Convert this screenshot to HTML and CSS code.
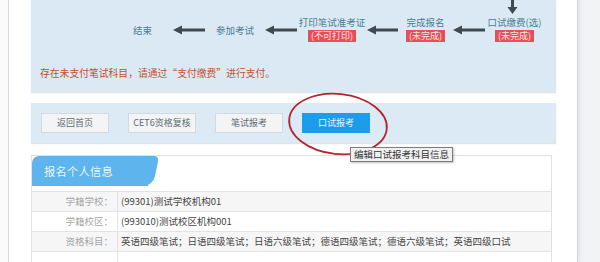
FILE: index.html
```html
<!DOCTYPE html>
<html lang="zh-CN">
<head>
<meta charset="utf-8">
<title>报名</title>
<link rel="stylesheet" href="styles.css">
</head>
<body>
<div class="page">
  <div class="gutter"></div>
  <div class="main">
    <section class="flow-panel">
      <div class="down-row">
        <svg class="down-arrow" width="13" height="14" viewBox="0 0 13 14"><rect x="5" y="0" width="3" height="8" fill="#3e4a50"/><path d="M1.5 7 L11.5 7 L6.5 14 Z" fill="#3e4a50"/></svg>
      </div>
      <div class="flow">
        <div class="step s1"><span class="label">结束</span></div>
        <svg class="arrow w32" viewBox="0 0 32 10"><path d="M0 5 L9 0.5 L9 9.5 Z" fill="#3e4a50"/><rect x="8" y="3.5" width="24" height="3" fill="#3e4a50"/></svg>
        <div class="step s2"><span class="label">参加考试</span></div>
        <svg class="arrow w32" viewBox="0 0 32 10"><path d="M0 5 L9 0.5 L9 9.5 Z" fill="#3e4a50"/><rect x="8" y="3.5" width="24" height="3" fill="#3e4a50"/></svg>
        <div class="step s3"><span class="label">打印笔试准考证</span><span class="badge">(不可打印)</span></div>
        <svg class="arrow w31" viewBox="0 0 31 10"><path d="M0 5 L9 0.5 L9 9.5 Z" fill="#3e4a50"/><rect x="8" y="3.5" width="23" height="3" fill="#3e4a50"/></svg>
        <div class="step s4"><span class="label">完成报名</span><span class="badge">(未完成)</span></div>
        <svg class="arrow w32" viewBox="0 0 32 10"><path d="M0 5 L9 0.5 L9 9.5 Z" fill="#3e4a50"/><rect x="8" y="3.5" width="24" height="3" fill="#3e4a50"/></svg>
        <div class="step s5"><span class="label">口试缴费(选)</span><span class="badge">(未完成)</span></div>
      </div>
      <p class="warn">存在未支付笔试科目，请通过“支付缴费”进行支付。</p>
    </section>

    <section class="btn-panel">
      <button class="btn">返回首页</button>
      <button class="btn">CET6资格复核</button>
      <button class="btn">笔试报考</button>
      <button class="btn btn-primary">口试报考</button>
      <svg class="ring" width="104" height="68" viewBox="0 0 104 68"><ellipse cx="52" cy="34" rx="49" ry="30" fill="none" stroke="#b3262b" stroke-width="1.8" transform="rotate(6 52 34)"/></svg>
      <div class="tooltip">编辑口试报考科目信息</div>
    </section>

    <section class="card">
      <div class="card-head"><span class="tab">报名个人信息</span></div>
      <div class="rows">
        <div class="row alt"><div class="key">学籍学校：</div><div class="val">(99301)测试学校机构01</div></div>
        <div class="row"><div class="key">学籍校区：</div><div class="val">(993010)测试校区机构001</div></div>
        <div class="row alt"><div class="key">资格科目：</div><div class="val">英语四级笔试；日语四级笔试；日语六级笔试；德语四级笔试；德语六级笔试；英语四级口试</div></div>
        <div class="row"><div class="key"></div><div class="val"></div></div>
      </div>
    </section>
  </div>
  <div class="side"></div>
</div>
</body>
</html>
```

FILE: styles.css
```css
* { box-sizing: border-box; }
html, body {
  margin: 0;
  padding: 0;
  background: #ffffff;
  font-family: "Noto Sans CJK SC", "Noto Sans", "Liberation Sans", sans-serif;
  height: 262px;
  overflow: hidden;
}
.page {
  display: flex;
  height: 262px;
  overflow: hidden;
}
.gutter {
  width: 9px;
  flex: none;
  background: #fbfbfb;
  border-right: 1px solid #d9d9d9;
}
.main {
  width: 568px;
  flex: none;
  padding-left: 22px;
  padding-right: 21px;
  background: #ffffff;
}
.side {
  flex: 1;
  border-left: 1px solid #cfd3d6;
  background: linear-gradient(to right, #e6e9ec, #f1f3f5 6px);
}

/* flow panel */
.flow-panel {
  background: #dae9f4;
  height: 92px;
  box-shadow: 0 1px 1px rgba(120,150,170,0.25);
}
.down-row {
  height: 14px;
  padding-left: 475px;
  display: flex;
}
.down-arrow { display: block; }
.flow {
  margin-top: 2px;
  padding-left: 81px;
  display: flex;
  align-items: center;
  height: 26px;
}
.step {
  display: flex;
  flex-direction: column;
  align-items: center;
  color: #4c7d90;
  font-size: 9.5px;
}
.label { line-height: 12px; white-space: nowrap; }
.badge {
  margin-top: 2px;
  height: 12px;
  line-height: 12px;
  padding: 0 3px;
  background: #e74f58;
  color: #fde6e6;
  font-size: 9px;
  white-space: nowrap;
}
.s1 { width: 61px; padding-top: 1px; }
.s2 { width: 60px; padding-top: 1px; }
.s3 { width: 70px; }
.s4 { width: 55px; }
.s5 { width: 59px; }
.arrow { height: 10px; display: block; flex: none; margin-top: 1px; }
.w32 { width: 32px; }
.w31 { width: 31px; }
.warn {
  margin: 24px 0 0 9px;
  font-size: 9.8px;
  line-height: 14px;
  color: #c4502d;
}

/* buttons */
.btn-panel {
  position: relative;
  margin-top: 11px;
  height: 40px;
  background: #dbeaf4;
  padding: 10px 0 0 10px;
  display: flex;
  gap: 19px;
  box-shadow: 0 1px 1px rgba(120,150,170,0.25);
}
.btn {
  width: 68px;
  height: 20px;
  margin: 0;
  padding: 0;
  border: 1px solid #d3d9de;
  background: #f2f4f6;
  color: #5f6b72;
  font-family: inherit;
  font-size: 9px;
  line-height: 18px;
}
.btn-primary {
  background: #1d9ce9;
  border-color: #1d9ce9;
  color: #e6f5ff;
}
.ring {
  position: absolute;
  left: 255px;
  top: -13px;
}
.tooltip {
  position: absolute;
  left: 319px;
  top: 44px;
  height: 15px;
  padding: 0 3px;
  background: #f1f1f1;
  border: 1px solid #7c7c7c;
  box-shadow: 1px 1px 2px rgba(0,0,0,0.25);
  color: #333;
  font-size: 9.5px;
  line-height: 13px;
  white-space: nowrap;
  z-index: 2;
}

/* card */
.card {
  margin-top: 12px;
  width: 521px;
  border: 1px solid #e0e0e0;
  background: #ffffff;
}
.card-head { height: 30px; display: flex; }
.tab {
  position: relative;
  width: 116px;
  height: 30px;
  background: #5eb4ec;
  color: #eaf6fe;
  font-size: 11.3px;
  line-height: 30px;
  padding-left: 12px;
  border-radius: 7px 0 0 0;
  letter-spacing: 0.2px;
}
.tab::after {
  content: "";
  position: absolute;
  top: 0;
  right: -8px;
  width: 16px;
  height: 30px;
  background: #5eb4ec;
  transform: skewX(-12deg);
  border-radius: 0 5px 9px 0;
}
.rows { margin-top: 5px; }
.row {
  display: flex;
  height: 20px;
  border-top: 1px solid #e3e3e3;
  font-size: 9.5px;
  line-height: 19px;
}
.row.alt { background: #f6f6f6; }
.key {
  width: 86px;
  flex: none;
  text-align: right;
  padding-right: 4px;
  color: #a6a6a6;
  border-right: 1px solid #e3e3e3;
}
.val {
  padding-left: 3px;
  color: #444;
  white-space: nowrap;
}
```
